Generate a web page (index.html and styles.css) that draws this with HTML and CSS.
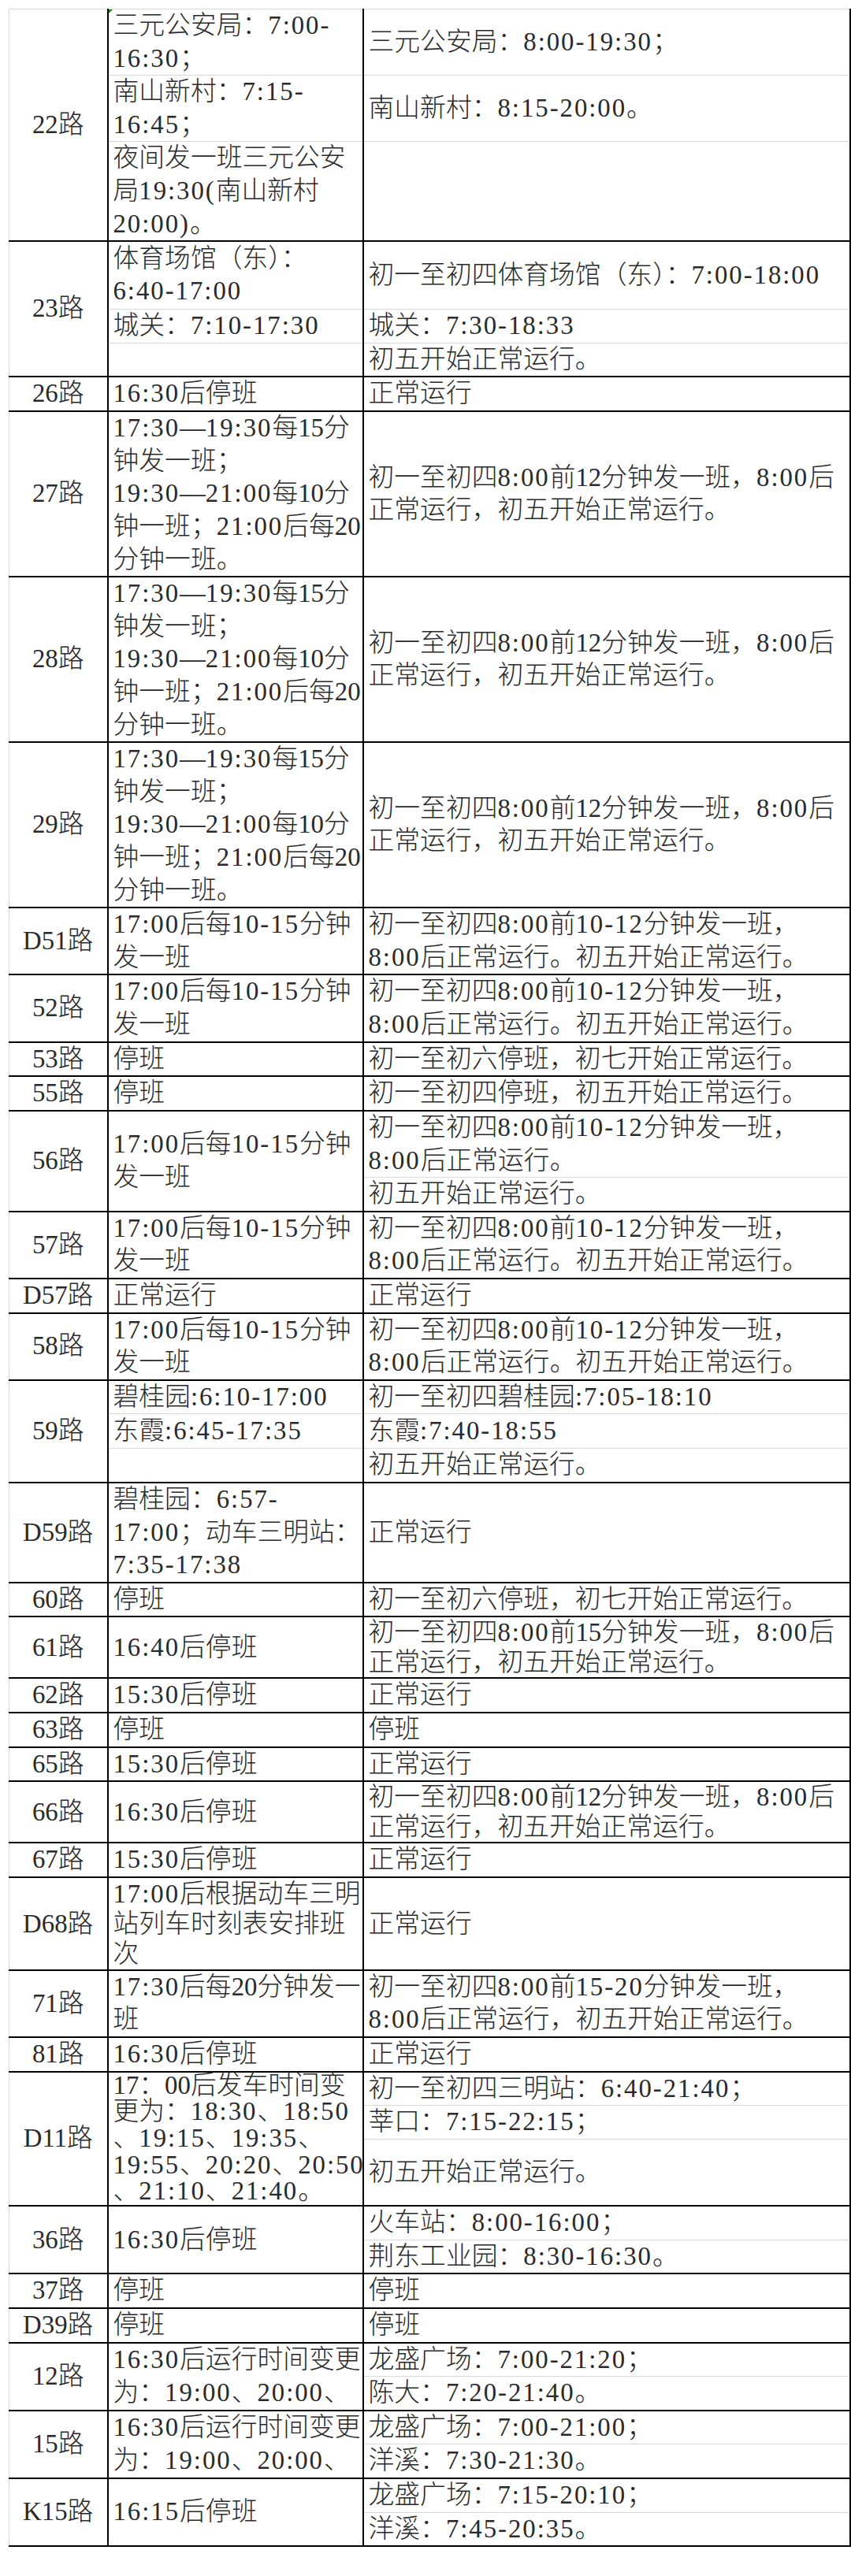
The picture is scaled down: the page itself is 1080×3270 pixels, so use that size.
FILE: index.html
```html
<!DOCTYPE html>
<html lang="zh-CN">
<head>
<meta charset="utf-8">
<title>春节公交运行时间表</title>
<link rel="stylesheet" href="styles.css">
</head>
<body>
<div class="page">
<table class="sheet">
<colgroup><col class="w1"><col class="w2"><col class="w3"></colgroup>
<tbody>
<tr class="h84 first"><td class="route" rowspan="3">22路</td><td class="c2 mark">三元公安局：<span class="t">7:00-</span><br><span class="t">16:30</span>；</td><td class="c3">三元公安局：<span class="t">8:00-19:30</span>；</td></tr>
<tr class="h84"><td class="c2">南山新村：<span class="t">7:15-</span><br><span class="t">16:45</span>；</td><td class="c3">南山新村：<span class="t">8:15-20:00</span>。</td></tr>
<tr class="h125 end"><td class="c2">夜间发一班三元公安<br>局<span class="t">19:30(</span>南山新村<br><span class="t">20:00)</span>。</td><td class="c3"></td></tr>

<tr class="h86"><td class="route" rowspan="3">23路</td><td class="c2">体育场馆（东）：<br><span class="t">6:40-17:00</span></td><td class="c3">初一至初四体育场馆（东）：<span class="t">7:00-18:00</span></td></tr>
<tr class="h43"><td class="c2">城关：<span class="t">7:10-17:30</span></td><td class="c3">城关：<span class="t">7:30-18:33</span></td></tr>
<tr class="h40 end"><td class="c2"></td><td class="c3">初五开始正常运行。</td></tr>

<tr class="h44 end"><td class="route">26路</td><td class="c2"><span class="t">16:30</span>后停班</td><td class="c3">正常运行</td></tr>

<tr class="h208 end"><td class="route">27路</td><td class="c2"><span class="t">17:30</span>—<span class="t">19:30</span>每15分<br>钟发一班；<br><span class="t">19:30</span>—<span class="t">21:00</span>每10分<br>钟一班；<span class="t">21:00</span>后每20<br>分钟一班。</td><td class="c3">初一至初四<span class="t">8:00</span>前12分钟发一班，<span class="t">8:00</span>后<br>正常运行，初五开始正常运行。</td></tr>
<tr class="h210 end"><td class="route">28路</td><td class="c2"><span class="t">17:30</span>—<span class="t">19:30</span>每15分<br>钟发一班；<br><span class="t">19:30</span>—<span class="t">21:00</span>每10分<br>钟一班；<span class="t">21:00</span>后每20<br>分钟一班。</td><td class="c3">初一至初四<span class="t">8:00</span>前12分钟发一班，<span class="t">8:00</span>后<br>正常运行，初五开始正常运行。</td></tr>
<tr class="h208 end"><td class="route">29路</td><td class="c2"><span class="t">17:30</span>—<span class="t">19:30</span>每15分<br>钟发一班；<br><span class="t">19:30</span>—<span class="t">21:00</span>每10分<br>钟一班；<span class="t">21:00</span>后每20<br>分钟一班。</td><td class="c3">初一至初四<span class="t">8:00</span>前12分钟发一班，<span class="t">8:00</span>后<br>正常运行，初五开始正常运行。</td></tr>

<tr class="h84 end"><td class="route">D51路</td><td class="c2"><span class="t">17:00</span>后每<span class="t">10-15</span>分钟<br>发一班</td><td class="c3">初一至初四<span class="t">8:00</span>前<span class="t">10-12</span>分钟发一班，<br><span class="t">8:00</span>后正常运行。初五开始正常运行。</td></tr>
<tr class="h85 end"><td class="route">52路</td><td class="c2"><span class="t">17:00</span>后每<span class="t">10-15</span>分钟<br>发一班</td><td class="c3">初一至初四<span class="t">8:00</span>前<span class="t">10-12</span>分钟发一班，<br><span class="t">8:00</span>后正常运行。初五开始正常运行。</td></tr>
<tr class="h43 end"><td class="route">53路</td><td class="c2">停班</td><td class="c3">初一至初六停班，初七开始正常运行。</td></tr>
<tr class="h43 end"><td class="route">55路</td><td class="c2">停班</td><td class="c3">初一至初四停班，初五开始正常运行。</td></tr>

<tr class="h85"><td class="route" rowspan="2">56路</td><td class="c2 span" rowspan="2"><span class="t">17:00</span>后每<span class="t">10-15</span>分钟<br>发一班</td><td class="c3">初一至初四<span class="t">8:00</span>前<span class="t">10-12</span>分钟发一班，<br><span class="t">8:00</span>后正常运行。</td></tr>
<tr class="h41 end"><td class="c3">初五开始正常运行。</td></tr>

<tr class="h85 end"><td class="route">57路</td><td class="c2"><span class="t">17:00</span>后每<span class="t">10-15</span>分钟<br>发一班</td><td class="c3">初一至初四<span class="t">8:00</span>前<span class="t">10-12</span>分钟发一班，<br><span class="t">8:00</span>后正常运行。初五开始正常运行。</td></tr>
<tr class="h43 end"><td class="route">D57路</td><td class="c2">正常运行</td><td class="c3">正常运行</td></tr>
<tr class="h84 end"><td class="route">58路</td><td class="c2"><span class="t">17:00</span>后每<span class="t">10-15</span>分钟<br>发一班</td><td class="c3">初一至初四<span class="t">8:00</span>前<span class="t">10-12</span>分钟发一班，<br><span class="t">8:00</span>后正常运行。初五开始正常运行。</td></tr>

<tr class="h43"><td class="route" rowspan="3">59路</td><td class="c2">碧桂园<span class="t">:6:10-17:00</span></td><td class="c3">初一至初四碧桂园<span class="t">:7:05-18:10</span></td></tr>
<tr class="h44"><td class="c2">东霞<span class="t">:6:45-17:35</span></td><td class="c3">东霞<span class="t">:7:40-18:55</span></td></tr>
<tr class="h42 end"><td class="c2"></td><td class="c3">初五开始正常运行。</td></tr>

<tr class="h126 end"><td class="route">D59路</td><td class="c2">碧桂园：<span class="t">6:57-</span><br><span class="t">17:00</span>；动车三明站：<br><span class="t">7:35-17:38</span></td><td class="c3">正常运行</td></tr>
<tr class="h42 end"><td class="route">60路</td><td class="c2">停班</td><td class="c3">初一至初六停班，初七开始正常运行。</td></tr>
<tr class="h77 end tight"><td class="route">61路</td><td class="c2"><span class="t">16:40</span>后停班</td><td class="c3">初一至初四<span class="t">8:00</span>前15分钟发一班，<span class="t">8:00</span>后<br>正常运行，初五开始正常运行。</td></tr>
<tr class="h41 end"><td class="route">62路</td><td class="c2"><span class="t">15:30</span>后停班</td><td class="c3">正常运行</td></tr>
<tr class="h40 end"><td class="route">63路</td><td class="c2">停班</td><td class="c3">停班</td></tr>
<tr class="h40 end"><td class="route">65路</td><td class="c2"><span class="t">15:30</span>后停班</td><td class="c3">正常运行</td></tr>
<tr class="h78 end tight"><td class="route">66路</td><td class="c2"><span class="t">16:30</span>后停班</td><td class="c3">初一至初四<span class="t">8:00</span>前12分钟发一班，<span class="t">8:00</span>后<br>正常运行，初五开始正常运行。</td></tr>
<tr class="h40 end"><td class="route">67路</td><td class="c2"><span class="t">15:30</span>后停班</td><td class="c3">正常运行</td></tr>
<tr class="h118 end tight"><td class="route">D68路</td><td class="c2"><span class="t">17:00</span>后根据动车三明<br>站列车时刻表安排班<br>次</td><td class="c3">正常运行</td></tr>
<tr class="h85 end"><td class="route">71路</td><td class="c2"><span class="t">17:30</span>后每20分钟发一<br>班</td><td class="c3">初一至初四<span class="t">8:00</span>前<span class="t">15-20</span>分钟发一班，<br><span class="t">8:00</span>后正常运行，初五开始正常运行。</td></tr>
<tr class="h41 end"><td class="route">81路</td><td class="c2"><span class="t">16:30</span>后停班</td><td class="c3">正常运行</td></tr>

<tr class="h42"><td class="route" rowspan="3">D11路</td><td class="c2 span dense" rowspan="3">17：00后发车时间变<br>更为：<span class="t">18:30</span>、<span class="t">18:50</span><br>、<span class="t">19:15</span>、<span class="t">19:35</span>、<br><span class="t">19:55</span>、<span class="t">20:20</span>、<span class="t">20:50</span><br>、<span class="t">21:10</span>、<span class="t">21:40</span>。</td><td class="c3">初一至初四三明站：<span class="t">6:40-21:40</span>；</td></tr>
<tr class="h42"><td class="c3">莘口：<span class="t">7:15-22:15</span>；</td></tr>
<tr class="h85 end"><td class="c3">初五开始正常运行。</td></tr>

<tr class="h42"><td class="route" rowspan="2">36路</td><td class="c2 span" rowspan="2"><span class="t">16:30</span>后停班</td><td class="c3">火车站：<span class="t">8:00-16:00</span>；</td></tr>
<tr class="h43 end"><td class="c3">荆东工业园：<span class="t">8:30-16:30</span>。</td></tr>

<tr class="h42 end"><td class="route">37路</td><td class="c2">停班</td><td class="c3">停班</td></tr>
<tr class="h42 end"><td class="route">D39路</td><td class="c2">停班</td><td class="c3">停班</td></tr>

<tr class="h42"><td class="route" rowspan="2">12路</td><td class="c2 span" rowspan="2"><span class="t">16:30</span>后运行时间变更<br>为：<span class="t">19:00</span>、<span class="t">20:00</span>、</td><td class="c3">龙盛广场：<span class="t">7:00-21:20</span>；</td></tr>
<tr class="h42 end"><td class="c3">陈大：<span class="t">7:20-21:40</span>。</td></tr>

<tr class="h42"><td class="route" rowspan="2">15路</td><td class="c2 span" rowspan="2"><span class="t">16:30</span>后运行时间变更<br>为：<span class="t">19:00</span>、<span class="t">20:00</span>、</td><td class="c3">龙盛广场：<span class="t">7:00-21:00</span>；</td></tr>
<tr class="h42 end"><td class="c3">洋溪：<span class="t">7:30-21:30</span>。</td></tr>

<tr class="h42"><td class="route" rowspan="2">K15路</td><td class="c2 span" rowspan="2"><span class="t">16:15</span>后停班</td><td class="c3">龙盛广场：<span class="t">7:15-20:10</span>；</td></tr>
<tr class="h42 end"><td class="c3">洋溪：<span class="t">7:45-20:35</span>。</td></tr>
</tbody>
</table>
</div>
</body>
</html>
```
FILE: styles.css
```css
html, body {
  margin: 0;
  padding: 0;
  background: #ffffff;
}

.page {
  padding: 11px 0 0 11px;
}

.sheet {
  border-collapse: collapse;
  table-layout: fixed;
  width: 1067px;
  font-family: "Liberation Serif", "Noto Sans CJK SC", serif;
  font-size: 32.8px;
  font-weight: 300;
  line-height: 41.6px;
  color: #2a2a2a;
}

.w1 { width: 125px; }
.w2 { width: 324px; }
.w3 { width: 618px; }

.sheet td {
  padding: 0 0 0 6px;
  vertical-align: middle;
  white-space: nowrap;
  text-align: left;
  border-bottom: 1px solid #d9d9d9;
}

.sheet td.route {
  padding: 0;
  text-align: center;
  border-left: 1px solid #d9d9d9;
  border-right: 2px solid #000000;
  border-bottom: 2px solid #000000;
}

.sheet td.c2 {
  border-right: 2px solid #000000;
}

.sheet td.c3 {
  border-right: 2px solid #000000;
}

.sheet td.span {
  border-bottom: 2px solid #000000;
}

.sheet tr.end td {
  border-bottom: 2px solid #000000;
}

.sheet tr.first td {
  border-top: 1px solid #d9d9d9;
}

.sheet tr.tight td {
  line-height: 38px;
}

.sheet td.dense {
  line-height: 33.6px;
}

/* time strings: widen Latin run to the half-width pitch of the original */
.t {
  letter-spacing: 0.06em;
}

.mark {
  position: relative;
}

.mark::before {
  content: "";
  position: absolute;
  left: 0;
  top: 0;
  width: 0;
  height: 0;
  border-top: 5px solid #1a8a1a;
  border-right: 5px solid transparent;
}

.h40 { height: 40px; }
.h41 { height: 41px; }
.h42 { height: 42px; }
.h43 { height: 43px; }
.h44 { height: 44px; }
.h77 { height: 77px; }
.h78 { height: 78px; }
.h84 { height: 84px; }
.h85 { height: 85px; }
.h86 { height: 86px; }
.h118 { height: 118px; }
.h125 { height: 125px; }
.h126 { height: 126px; }
.h208 { height: 208px; }
.h210 { height: 210px; }
```
